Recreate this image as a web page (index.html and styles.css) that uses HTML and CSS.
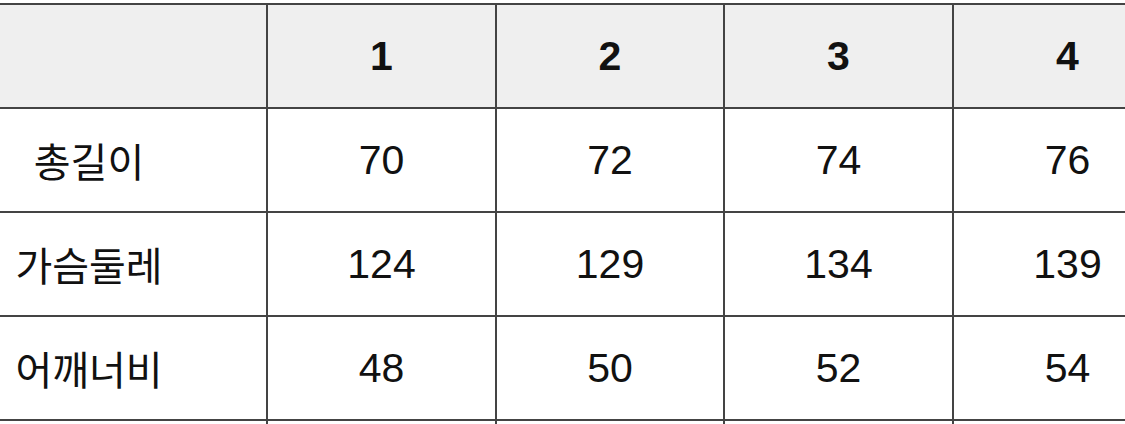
FILE: index.html
```html
<!DOCTYPE html>
<html lang="ko">
<head>
<meta charset="utf-8">
<title>사이즈표</title>
<link rel="stylesheet" href="styles.css">
</head>
<body>
<div class="size-table">
  <div class="cell head"></div>
  <div class="cell head num">1</div>
  <div class="cell head num">2</div>
  <div class="cell head num">3</div>
  <div class="cell head num">4</div>

  <div class="cell label">총길이</div>
  <div class="cell num">70</div>
  <div class="cell num">72</div>
  <div class="cell num">74</div>
  <div class="cell num">76</div>

  <div class="cell label">가슴둘레</div>
  <div class="cell num">124</div>
  <div class="cell num">129</div>
  <div class="cell num">134</div>
  <div class="cell num">139</div>

  <div class="cell label">어깨너비</div>
  <div class="cell num">48</div>
  <div class="cell num">50</div>
  <div class="cell num">52</div>
  <div class="cell num">54</div>

  <div class="cell label"></div>
  <div class="cell num"></div>
  <div class="cell num"></div>
  <div class="cell num"></div>
  <div class="cell num"></div>
</div>
</body>
</html>
```

FILE: styles.css
```css
html, body {
  margin: 0;
  padding: 0;
  background: #ffffff;
  overflow: hidden;
}

body {
  width: 1125px;
  height: 424px;
}

.size-table {
  display: grid;
  grid-template-columns: 354px 227px 226px 227px 227px;
  grid-auto-rows: 102px;
  gap: 2px;
  padding: 2px;
  background: #444444;
  width: max-content;
  margin-top: 3px;
  margin-left: -90px;
}

.cell {
  background: #ffffff;
  display: flex;
  align-items: center;
  justify-content: center;
  color: #111111;
}

.cell.head {
  background: #efefef;
}

.num {
  font-family: "Liberation Sans", Arial, sans-serif;
  font-size: 41px;
}

.head.num {
  font-weight: 700;
}

.label {
  font-family: "Noto Sans CJK KR", "Noto Sans", sans-serif;
  font-size: 40px;
}
```
